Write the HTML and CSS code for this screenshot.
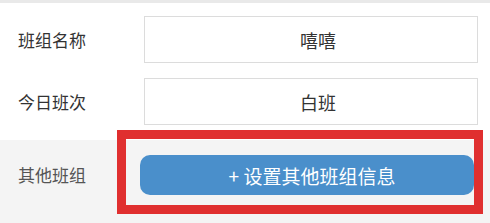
FILE: index.html
```html
<!DOCTYPE html>
<html lang="zh-CN">
<head>
    <meta charset="UTF-8">
    <meta name="viewport" content="width=device-width, initial-scale=1.0">
    <title>班组设置</title>
    <link rel="stylesheet" href="styles.css">
</head>
<body>
<div class="page">
    <div class="top-line"></div>
    <div class="form">
        <div class="row">
            <div class="label">班组名称</div>
            <div class="field">嘻嘻</div>
        </div>
        <div class="row">
            <div class="label">今日班次</div>
            <div class="field">白班</div>
        </div>
    </div>
    <div class="other">
        <div class="label other-label">其他班组</div>
        <button type="button" class="add-btn">+ 设置其他班组信息</button>
        <div class="highlight"></div>
    </div>
</div>
</body>
</html>
```

FILE: styles.css
```css
body {
    margin: 0;
    background: #f4f4f4;
    font-family: "Noto Sans CJK SC", "Noto Sans", sans-serif;
    overflow: hidden;
}
.page {
    width: 490px;
    height: 223px;
    display: flex;
    flex-direction: column;
}
.top-line {
    height: 3px;
    background: #e9e9e9;
}
.form {
    background: #fff;
    padding: 13px 12px 15px 18px;
    display: flex;
    flex-direction: column;
    gap: 15px;
}
.row {
    display: flex;
    align-items: center;
}
.label {
    width: 126px;
    font-size: 17px;
    color: #333;
}
.field {
    flex: 1;
    height: 47px;
    box-sizing: border-box;
    border: 1px solid #dcdcdc;
    display: flex;
    align-items: center;
    justify-content: center;
    font-size: 18px;
    color: #333;
    padding-left: 14px;
}
.other {
    flex: 1;
    position: relative;
    display: flex;
    align-items: flex-start;
    padding: 15px 16px 0 18px;
}
.other-label {
    width: 122px;
    height: 40px;
    line-height: 40px;
    color: #555;
}
.add-btn {
    width: 334px;
    height: 40px;
    border: none;
    border-radius: 10px;
    background: #4a8fcb;
    color: #fff;
    font-family: inherit;
    font-size: 19px;
    padding: 0 0 0 10px;
}
.highlight {
    position: absolute;
    left: 117px;
    top: -10px;
    width: 366px;
    height: 84px;
    box-sizing: border-box;
    border: 9px solid #e02f2f;
}
```
